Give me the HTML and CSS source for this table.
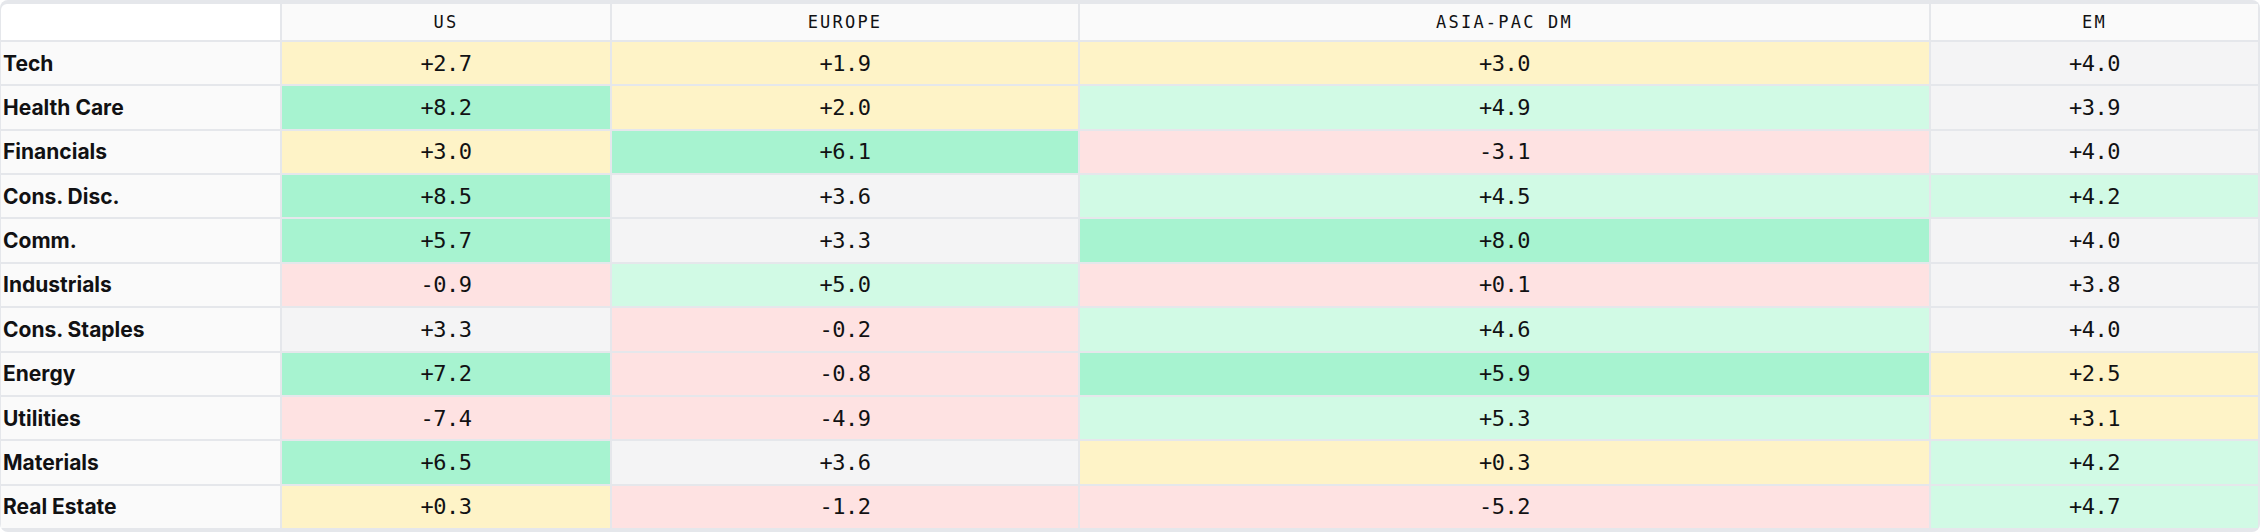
FILE: index.html
```html
<!DOCTYPE html>
<html>
<head>
<meta charset="utf-8">
<link rel="stylesheet" href="styles.css">
</head>
<body>
<div class="heat">
  <div class="hd corner"></div>
  <div class="hd">US</div>
  <div class="hd">EUROPE</div>
  <div class="hd">ASIA-PAC DM</div>
  <div class="hd">EM</div>

  <div class="lbl">Tech</div>
  <div class="v y">+2.7</div><div class="v y">+1.9</div><div class="v y">+3.0</div><div class="v n">+4.0</div>

  <div class="lbl">Health Care</div>
  <div class="v g">+8.2</div><div class="v y">+2.0</div><div class="v l">+4.9</div><div class="v n">+3.9</div>

  <div class="lbl">Financials</div>
  <div class="v y">+3.0</div><div class="v g">+6.1</div><div class="v r">-3.1</div><div class="v n">+4.0</div>

  <div class="lbl">Cons. Disc.</div>
  <div class="v g">+8.5</div><div class="v n">+3.6</div><div class="v l">+4.5</div><div class="v l">+4.2</div>

  <div class="lbl">Comm.</div>
  <div class="v g">+5.7</div><div class="v n">+3.3</div><div class="v g">+8.0</div><div class="v n">+4.0</div>

  <div class="lbl">Industrials</div>
  <div class="v r">-0.9</div><div class="v l">+5.0</div><div class="v r">+0.1</div><div class="v n">+3.8</div>

  <div class="lbl">Cons. Staples</div>
  <div class="v n">+3.3</div><div class="v r">-0.2</div><div class="v l">+4.6</div><div class="v n">+4.0</div>

  <div class="lbl">Energy</div>
  <div class="v g">+7.2</div><div class="v r">-0.8</div><div class="v g">+5.9</div><div class="v y">+2.5</div>

  <div class="lbl">Utilities</div>
  <div class="v r">-7.4</div><div class="v r">-4.9</div><div class="v l">+5.3</div><div class="v y">+3.1</div>

  <div class="lbl">Materials</div>
  <div class="v g">+6.5</div><div class="v n">+3.6</div><div class="v y">+0.3</div><div class="v l">+4.2</div>

  <div class="lbl">Real Estate</div>
  <div class="v y">+0.3</div><div class="v r">-1.2</div><div class="v r">-5.2</div><div class="v l">+4.7</div>
</div>
</body>
</html>
```
FILE: styles.css
```css
html, body {
  margin: 0;
  padding: 0;
  background: #ffffff;
}
.heat {
  box-sizing: border-box;
  width: 2260px;
  height: 532px;
  display: grid;
  grid-template-columns: 279px 328px 466px 849px 327px;
  grid-template-rows: 36px repeat(11, 1fr);
  gap: 2px;
  padding: 4px 2px 4px 1px;
  background: #e5e7eb;
  border-radius: 8px;
  overflow: hidden;
}
.hd {
  background: #fafafa;
  display: flex;
  align-items: center;
  justify-content: center;
  font-family: "DejaVu Sans Mono", monospace;
  font-size: 17px;
  letter-spacing: 2.2px;
  color: #111113;
}
.hd.corner {
  background: #ffffff;
  border-top-left-radius: 6px;
}
.lbl {
  background: #fafafa;
  display: flex;
  align-items: center;
  padding-left: 2px;
  font-family: Inter, "Liberation Sans", sans-serif;
  font-weight: 700;
  font-size: 21px;
  color: #111113;
}
.v {
  display: flex;
  align-items: center;
  justify-content: center;
  font-family: "DejaVu Sans Mono", monospace;
  font-size: 22px;
  letter-spacing: -0.5px;
  color: #111113;
}
.y { background: #fef3c7; }
.g { background: #a7f3d0; }
.l { background: #d1fae5; }
.r { background: #fee2e2; }
.n { background: #f4f4f5; }
```
